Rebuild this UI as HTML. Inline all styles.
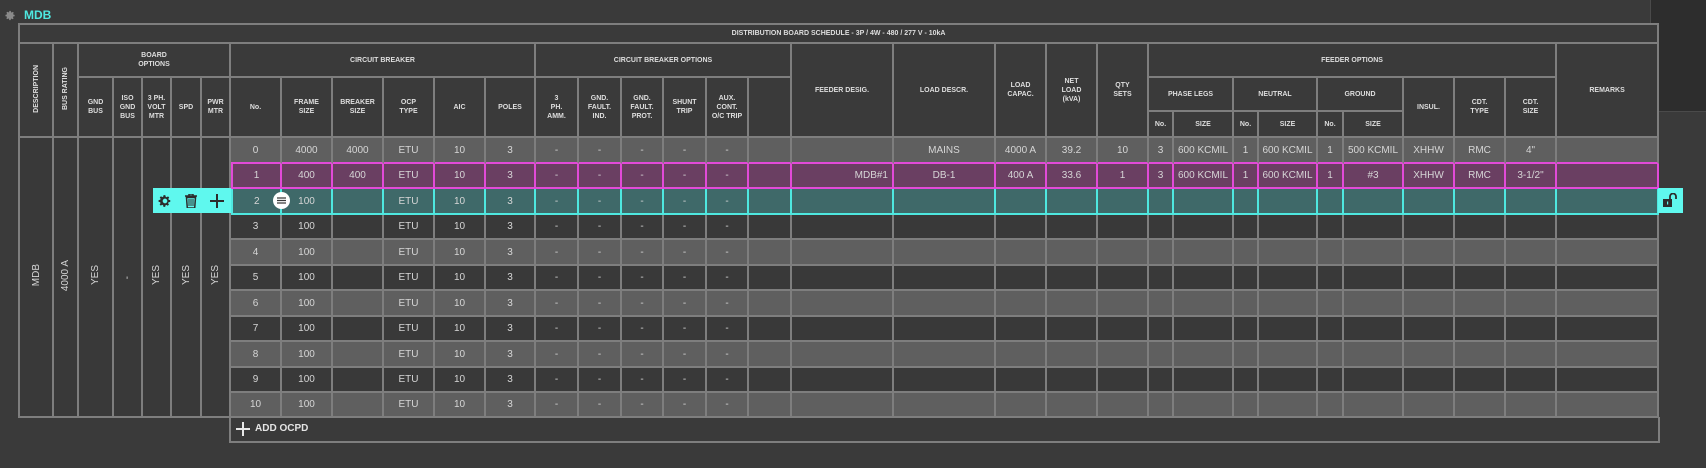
<!DOCTYPE html>
<html><head><meta charset="utf-8"><style>
*{box-sizing:border-box;margin:0;padding:0}
body{width:1706px;height:468px;background:#3a3a3a;position:relative;overflow:hidden;font-family:"Liberation Sans",sans-serif;color:#d6d6d6}
table{position:absolute;left:18px;top:23px;border-collapse:separate;border-spacing:0;table-layout:fixed;width:1641px;border-left:2px solid #7e7e7e;border-top:2px solid #7e7e7e}
td{border-right:2px solid #7e7e7e;border-bottom:2px solid #7e7e7e;text-align:center;vertical-align:middle;overflow:hidden;white-space:nowrap;font-size:10px;padding:0}
thead td{font-size:7px;font-weight:bold;line-height:9px;white-space:normal;background:#3a3a3a;color:#dedede}
.v{writing-mode:vertical-rl;transform:rotate(180deg);display:inline-block}
.g td.d{background:#5f5f5f}
.k td.d{background:#393939}
.p td.d{background:#6a3f62;border-right-color:#e24ad8;border-bottom-color:#e24ad8}
.p td.d:first-child{border-left:2px solid #e24ad8}
.g0 td.d{border-bottom-color:#e24ad8}
.t td.d{background:#3f6969;border-right-color:#4ee8e0;border-bottom-color:#4ee8e0}
.t td.d:first-child{border-left:2px solid #4ee8e0}
.lp{background:#393939;font-size:10px}
</style></head><body>
<svg style="position:absolute;left:5px;top:10px" width="11" height="11" viewBox="0 0 24 24"><path fill="#8a8a8a" d="M12 8a4 4 0 1 0 0 8a4 4 0 1 0 0-8zm9 5.5v-3l-2.6-.5-.7-1.7 1.5-2.2-2.1-2.1-2.2 1.5-1.7-.7L12.5 2h-3l-.5 2.6-1.7.7-2.2-1.5-2.1 2.1 1.5 2.2-.7 1.7L1 10.5v3l2.6.5.7 1.7-1.5 2.2 2.1 2.1 2.2-1.5 1.7.7.5 2.8h3l.5-2.6 1.7-.7 2.2 1.5 2.1-2.1-1.5-2.2.7-1.7z"/></svg>
<div style="position:absolute;left:24px;top:8px;font-size:12px;font-weight:bold;color:#4ee8e0">MDB</div>
<div style="position:absolute;left:1650px;top:0;width:56px;height:112px;background:#2d2d2d;border-left:1px solid #4a4a4a;border-bottom:1px solid #4a4a4a"></div>
<table>
<colgroup>
<col style="width:34px"><col style="width:25px"><col style="width:35px"><col style="width:29px"><col style="width:29px"><col style="width:30px"><col style="width:29px">
<col style="width:51px"><col style="width:51px"><col style="width:51px"><col style="width:51px"><col style="width:51px"><col style="width:50px">
<col style="width:43px"><col style="width:43px"><col style="width:42px"><col style="width:43px"><col style="width:42px"><col style="width:43px">
<col style="width:102px"><col style="width:102px"><col style="width:51px"><col style="width:51px"><col style="width:51px">
<col style="width:25px"><col style="width:60px"><col style="width:25px"><col style="width:59px"><col style="width:26px"><col style="width:60px">
<col style="width:51px"><col style="width:51px"><col style="width:51px"><col style="width:102px">
</colgroup>
<thead>
<tr style="height:19px"><td colspan="34">DISTRIBUTION BOARD SCHEDULE - 3P / 4W - 480 / 277 V - 10kA</td></tr>
<tr style="height:34px">
<td rowspan="3"><span class="v">DESCRIPTION</span></td><td rowspan="3"><span class="v">BUS RATING</span></td>
<td colspan="5">BOARD<br>OPTIONS</td><td colspan="6">CIRCUIT BREAKER</td><td colspan="6">CIRCUIT BREAKER OPTIONS</td>
<td rowspan="3">FEEDER DESIG.</td><td rowspan="3">LOAD DESCR.</td><td rowspan="3">LOAD<br>CAPAC.</td><td rowspan="3">NET<br>LOAD<br>(kVA)</td><td rowspan="3">QTY<br>SETS</td>
<td colspan="9">FEEDER OPTIONS</td><td rowspan="3">REMARKS</td></tr>
<tr style="height:34px">
<td rowspan="2">GND<br>BUS</td><td rowspan="2">ISO<br>GND<br>BUS</td><td rowspan="2">3 PH.<br>VOLT<br>MTR</td><td rowspan="2">SPD</td><td rowspan="2">PWR<br>MTR</td>
<td rowspan="2">No.</td><td rowspan="2">FRAME<br>SIZE</td><td rowspan="2">BREAKER<br>SIZE</td><td rowspan="2">OCP<br>TYPE</td><td rowspan="2">AIC</td><td rowspan="2">POLES</td>
<td rowspan="2">3<br>PH.<br>AMM.</td><td rowspan="2">GND.<br>FAULT.<br>IND.</td><td rowspan="2">GND.<br>FAULT.<br>PROT.</td><td rowspan="2">SHUNT<br>TRIP</td><td rowspan="2">AUX.<br>CONT.<br>O/C TRIP</td><td rowspan="2"></td>
<td colspan="2">PHASE LEGS</td><td colspan="2">NEUTRAL</td><td colspan="2">GROUND</td>
<td rowspan="2">INSUL.</td><td rowspan="2">CDT.<br>TYPE</td><td rowspan="2">CDT.<br>SIZE</td></tr>
<tr style="height:26px"><td>No.</td><td>SIZE</td><td>No.</td><td>SIZE</td><td>No.</td><td>SIZE</td></tr>
</thead>
<tbody>
<tr class="g g0" style="height:26px">
<td rowspan="11" class="lp"><span class="v">MDB</span></td><td rowspan="11" class="lp"><span class="v">4000 A</span></td><td rowspan="11" class="lp"><span class="v">YES</span></td><td rowspan="11" class="lp"><span class="v">-</span></td><td rowspan="11" class="lp"><span class="v">YES</span></td><td rowspan="11" class="lp"><span class="v">YES</span></td><td rowspan="11" class="lp"><span class="v">YES</span></td>
<td class="d">0</td><td class="d">4000</td><td class="d">4000</td><td class="d">ETU</td><td class="d">10</td><td class="d">3</td><td class="d">-</td><td class="d">-</td><td class="d">-</td><td class="d">-</td><td class="d">-</td><td class="d"></td><td class="d"></td><td class="d">MAINS</td><td class="d">4000 A</td><td class="d">39.2</td><td class="d">10</td><td class="d">3</td><td class="d">600 KCMIL</td><td class="d">1</td><td class="d">600 KCMIL</td><td class="d">1</td><td class="d">500 KCMIL</td><td class="d">XHHW</td><td class="d">RMC</td><td class="d">4"</td><td class="d"></td></tr>
<tr class="p" style="height:25px"><td class="d">1</td><td class="d">400</td><td class="d">400</td><td class="d">ETU</td><td class="d">10</td><td class="d">3</td><td class="d">-</td><td class="d">-</td><td class="d">-</td><td class="d">-</td><td class="d">-</td><td class="d"></td><td class="d" style="text-align:right;padding-right:4px">MDB#1</td><td class="d">DB-1</td><td class="d">400 A</td><td class="d">33.6</td><td class="d">1</td><td class="d">3</td><td class="d">600 KCMIL</td><td class="d">1</td><td class="d">600 KCMIL</td><td class="d">1</td><td class="d">#3</td><td class="d">XHHW</td><td class="d">RMC</td><td class="d">3-1/2"</td><td class="d"></td></tr>
<tr class="t" style="height:26px"><td class="d" style="text-align:left;padding-left:21px">2</td><td class="d">100</td><td class="d"></td><td class="d">ETU</td><td class="d">10</td><td class="d">3</td><td class="d">-</td><td class="d">-</td><td class="d">-</td><td class="d">-</td><td class="d">-</td><td class="d"></td><td class="d"></td><td class="d"></td><td class="d"></td><td class="d"></td><td class="d"></td><td class="d"></td><td class="d"></td><td class="d"></td><td class="d"></td><td class="d"></td><td class="d"></td><td class="d"></td><td class="d"></td><td class="d"></td><td class="d"></td></tr>
<tr class="k" style="height:25px"><td class="d">3</td><td class="d">100</td><td class="d"></td><td class="d">ETU</td><td class="d">10</td><td class="d">3</td><td class="d">-</td><td class="d">-</td><td class="d">-</td><td class="d">-</td><td class="d">-</td><td class="d"></td><td class="d"></td><td class="d"></td><td class="d"></td><td class="d"></td><td class="d"></td><td class="d"></td><td class="d"></td><td class="d"></td><td class="d"></td><td class="d"></td><td class="d"></td><td class="d"></td><td class="d"></td><td class="d"></td><td class="d"></td></tr>
<tr class="g" style="height:26px"><td class="d">4</td><td class="d">100</td><td class="d"></td><td class="d">ETU</td><td class="d">10</td><td class="d">3</td><td class="d">-</td><td class="d">-</td><td class="d">-</td><td class="d">-</td><td class="d">-</td><td class="d"></td><td class="d"></td><td class="d"></td><td class="d"></td><td class="d"></td><td class="d"></td><td class="d"></td><td class="d"></td><td class="d"></td><td class="d"></td><td class="d"></td><td class="d"></td><td class="d"></td><td class="d"></td><td class="d"></td><td class="d"></td></tr>
<tr class="k" style="height:25px"><td class="d">5</td><td class="d">100</td><td class="d"></td><td class="d">ETU</td><td class="d">10</td><td class="d">3</td><td class="d">-</td><td class="d">-</td><td class="d">-</td><td class="d">-</td><td class="d">-</td><td class="d"></td><td class="d"></td><td class="d"></td><td class="d"></td><td class="d"></td><td class="d"></td><td class="d"></td><td class="d"></td><td class="d"></td><td class="d"></td><td class="d"></td><td class="d"></td><td class="d"></td><td class="d"></td><td class="d"></td><td class="d"></td></tr>
<tr class="g" style="height:26px"><td class="d">6</td><td class="d">100</td><td class="d"></td><td class="d">ETU</td><td class="d">10</td><td class="d">3</td><td class="d">-</td><td class="d">-</td><td class="d">-</td><td class="d">-</td><td class="d">-</td><td class="d"></td><td class="d"></td><td class="d"></td><td class="d"></td><td class="d"></td><td class="d"></td><td class="d"></td><td class="d"></td><td class="d"></td><td class="d"></td><td class="d"></td><td class="d"></td><td class="d"></td><td class="d"></td><td class="d"></td><td class="d"></td></tr>
<tr class="k" style="height:25px"><td class="d">7</td><td class="d">100</td><td class="d"></td><td class="d">ETU</td><td class="d">10</td><td class="d">3</td><td class="d">-</td><td class="d">-</td><td class="d">-</td><td class="d">-</td><td class="d">-</td><td class="d"></td><td class="d"></td><td class="d"></td><td class="d"></td><td class="d"></td><td class="d"></td><td class="d"></td><td class="d"></td><td class="d"></td><td class="d"></td><td class="d"></td><td class="d"></td><td class="d"></td><td class="d"></td><td class="d"></td><td class="d"></td></tr>
<tr class="g" style="height:26px"><td class="d">8</td><td class="d">100</td><td class="d"></td><td class="d">ETU</td><td class="d">10</td><td class="d">3</td><td class="d">-</td><td class="d">-</td><td class="d">-</td><td class="d">-</td><td class="d">-</td><td class="d"></td><td class="d"></td><td class="d"></td><td class="d"></td><td class="d"></td><td class="d"></td><td class="d"></td><td class="d"></td><td class="d"></td><td class="d"></td><td class="d"></td><td class="d"></td><td class="d"></td><td class="d"></td><td class="d"></td><td class="d"></td></tr>
<tr class="k" style="height:25px"><td class="d">9</td><td class="d">100</td><td class="d"></td><td class="d">ETU</td><td class="d">10</td><td class="d">3</td><td class="d">-</td><td class="d">-</td><td class="d">-</td><td class="d">-</td><td class="d">-</td><td class="d"></td><td class="d"></td><td class="d"></td><td class="d"></td><td class="d"></td><td class="d"></td><td class="d"></td><td class="d"></td><td class="d"></td><td class="d"></td><td class="d"></td><td class="d"></td><td class="d"></td><td class="d"></td><td class="d"></td><td class="d"></td></tr>
<tr class="g" style="height:25px"><td class="d">10</td><td class="d">100</td><td class="d"></td><td class="d">ETU</td><td class="d">10</td><td class="d">3</td><td class="d">-</td><td class="d">-</td><td class="d">-</td><td class="d">-</td><td class="d">-</td><td class="d"></td><td class="d"></td><td class="d"></td><td class="d"></td><td class="d"></td><td class="d"></td><td class="d"></td><td class="d"></td><td class="d"></td><td class="d"></td><td class="d"></td><td class="d"></td><td class="d"></td><td class="d"></td><td class="d"></td><td class="d"></td></tr>
</tbody>
</table>
<div style="position:absolute;left:229px;top:417px;width:1431px;height:26px;border:2px solid #7e7e7e;border-top:none"></div>
<svg style="position:absolute;left:236px;top:422px" width="14" height="14" viewBox="0 0 14 14"><path d="M7 0v14M0 7h14" stroke="#e8e8e8" stroke-width="2"/></svg>
<div style="position:absolute;left:255px;top:423px;font-size:10px;font-weight:bold;color:#e4e4e4">ADD OCPD</div>
<div style="position:absolute;left:153px;top:188px;width:78px;height:25px;background:#5ff8ee"></div>
<svg style="position:absolute;left:158px;top:194px" width="14" height="14" viewBox="0 0 24 24"><path fill="#2c2c2c" fill-rule="evenodd" d="M12 8a4 4 0 1 0 0 8a4 4 0 1 0 0-8zm9 5.5v-3l-2.6-.5-.7-1.7 1.5-2.2-2.1-2.1-2.2 1.5-1.7-.7L12.5 2h-3l-.5 2.6-1.7.7-2.2-1.5-2.1 2.1 1.5 2.2-.7 1.7L1 10.5v3l2.6.5.7 1.7-1.5 2.2 2.1 2.1 2.2-1.5 1.7.7.5 2.8h3l.5-2.6 1.7-.7 2.2 1.5 2.1-2.1-1.5-2.2.7-1.7z"/></svg>
<svg style="position:absolute;left:185px;top:194px" width="12" height="14" viewBox="0 0 12 14"><path d="M0 2h12M4 2V0h4v2M1.5 3.5h9l-.8 10.5H2.3z" fill="none" stroke="#2c2c2c" stroke-width="1.5"/><path d="M4 5v7M6 5v7M8 5v7" stroke="#2c2c2c" stroke-width="1"/></svg>
<svg style="position:absolute;left:210px;top:194px" width="14" height="14" viewBox="0 0 14 14"><path d="M7 0v14M0 7h14" stroke="#2c2c2c" stroke-width="2"/></svg>
<div style="position:absolute;left:273px;top:192px;width:17px;height:17px;border-radius:50%;background:#fff"></div>
<svg style="position:absolute;left:277px;top:196px" width="9" height="9" viewBox="0 0 9 9"><path d="M0 2h9M0 4.5h9M0 7h9" stroke="#3a3a3a" stroke-width="1.3"/></svg>
<div style="position:absolute;left:1658px;top:188px;width:25px;height:25px;background:#5ff8ee"></div>
<svg style="position:absolute;left:1663px;top:193px" width="15" height="14" viewBox="0 0 15 14"><rect x="0" y="6" width="9" height="8" fill="#2c2c2c"/><path d="M7 6V3.5a3 3 0 0 1 6 0V6" fill="none" stroke="#2c2c2c" stroke-width="1.8"/><rect x="4" y="8.5" width="1.2" height="3" fill="#5ff8ee"/></svg>
</body></html>
